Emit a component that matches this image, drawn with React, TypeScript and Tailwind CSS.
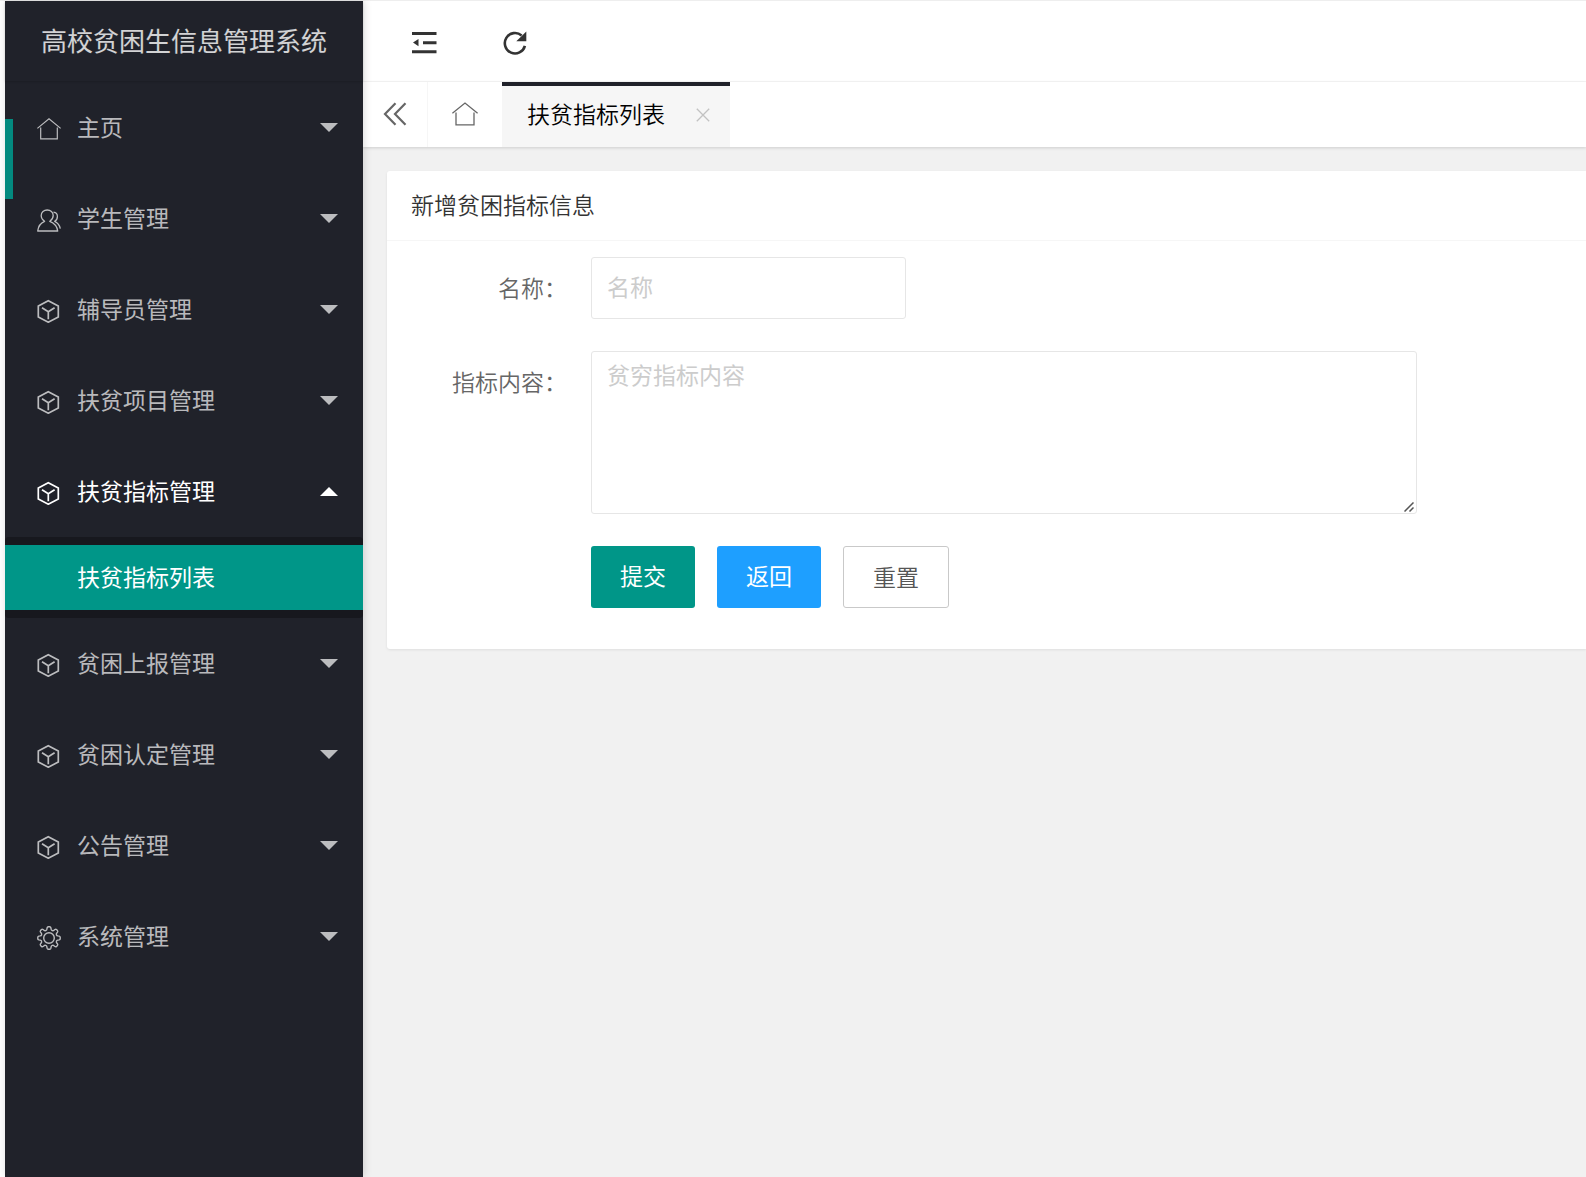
import React from 'react';

type IconName = 'home' | 'users' | 'cube' | 'gear';

interface MenuItem {
  title: string;
  icon: IconName;
  open?: boolean;
  children?: string[];
}

const menu: MenuItem[] = [
  { title: '主页', icon: 'home' },
  { title: '学生管理', icon: 'users' },
  { title: '辅导员管理', icon: 'cube' },
  { title: '扶贫项目管理', icon: 'cube' },
  { title: '扶贫指标管理', icon: 'cube', open: true, children: ['扶贫指标列表'] },
  { title: '贫困上报管理', icon: 'cube' },
  { title: '贫困认定管理', icon: 'cube' },
  { title: '公告管理', icon: 'cube' },
  { title: '系统管理', icon: 'gear' },
];

export default function App() {
  return (
    <div className="flex min-h-screen border-t border-[#eeeeee] bg-white pl-[5px] font-['Noto_Sans_CJK_SC',sans-serif] text-[23px] leading-8">
      <Sidebar />
      <div className="flex min-w-0 flex-1 flex-col bg-[#f1f1f1]">
        <Header />
        <TabBar />
        <main className="pt-6 pl-6">
          <IndicatorForm />
        </main>
      </div>
    </div>
  );
}

function Sidebar() {
  return (
    <aside className="relative z-10 w-[358px] shrink-0 bg-[#20222a] shadow-[1px_0_8px_rgba(0,0,0,0.15)]">
      <h1 className="flex h-20 items-center justify-center pb-0.5 text-[26px] font-normal text-white/80 shadow-[0_1px_2px_rgba(0,0,0,0.15)]">
        高校贫困生信息管理系统
      </h1>
      <span className="absolute top-[118px] left-0 h-20 w-2 bg-[#009688]/90"></span>
      <nav className="pt-px">
        <ul>
          {menu.map((item) => (
            <li key={item.title}>
              <a
                href="#"
                className={`flex h-[91px] items-center pr-[25px] pl-8 ${item.open ? 'text-white' : 'text-white/70'}`}
              >
                <span className="pt-[3px]">
                  <MenuIcon name={item.icon} />
                </span>
                <span className="ml-4 flex-1 pb-1">{item.title}</span>
                <svg width="18" height="9" viewBox="0 0 18 9" fill="currentColor">
                  <path d={item.open ? 'M0 9h18L9 0z' : 'M0 0h18L9 9z'} />
                </svg>
              </a>
              {item.children && (
                <ul className="rounded-sm bg-[#17181e] py-2">
                  {item.children.map((child) => (
                    <li key={child}>
                      <a href="#" className="flex h-[65px] items-center bg-[#009688] pb-1 pl-[72px] text-white">
                        {child}
                      </a>
                    </li>
                  ))}
                </ul>
              )}
            </li>
          ))}
        </ul>
      </nav>
    </aside>
  );
}

function Header() {
  return (
    <header className="flex h-[81px] items-center gap-[66px] border-b border-[#f6f6f6] bg-white pl-12 text-[#333333]">
      <button type="button" aria-label="侧边伸缩" className="pt-1">
        <svg width="26" height="24" viewBox="0 0 26 24" fill="currentColor">
          <path d="M1 1h24.500v3H1zM12 10.200h13.500v3H12zM1 19.300h24.500v3H1zM2 11.600l5.500-3.700v7.400z" />
        </svg>
      </button>
      <button type="button" aria-label="刷新" className="pt-1">
        <svg width="24" height="24" viewBox="0 0 24 24" fill="none">
          <path d="M18.600 4.400A10.200 10.200 0 1 0 21.900 14.800" stroke="currentColor" strokeWidth="2.600" />
          <path d="M23.300.6v9.600h-10z" fill="currentColor" />
        </svg>
      </button>
    </header>
  );
}

function TabBar() {
  return (
    <div className="flex h-[65px] bg-white shadow-[0_1px_3px_rgba(0,0,0,0.15)]">
      <button type="button" aria-label="向左" className="flex w-[65px] items-center justify-center border-r border-[#f6f6f6] pb-0.5 text-[#666666]">
        <svg width="24" height="24" viewBox="0 0 24 24" fill="none" stroke="currentColor" strokeWidth="2.200">
          <path d="M12.500 1.200 2 12l10.500 10.800M22.500 1.200 12 12l10.500 10.800" />
        </svg>
      </button>
      <button type="button" aria-label="主页" className="flex w-[74px] items-center justify-center pb-0.5 text-[#666666]">
        <HomeIcon size={26} />
      </button>
      <div className="flex w-[228px] items-center justify-between border-t-4 border-[#20222a] bg-[#f6f6f6] pr-5 pb-1 pl-[25px]">
        <a href="#" className="pb-1 font-[350] text-black">扶贫指标列表</a>
        <button type="button" aria-label="关闭" className="text-[#c2c2c2]">
          <svg width="14" height="14" viewBox="0 0 14 14" fill="none" stroke="currentColor" strokeWidth="1.300">
            <path d="m.8.800 12.400 12.400M13.200.8.800 13.200" />
          </svg>
        </button>
      </div>
    </div>
  );
}

function IndicatorForm() {
  return (
    <section className="rounded-l-[3px] bg-white shadow-[0_1px_3px_rgba(0,0,0,0.08)]">
      <h2 className="flex h-[70px] items-center border-b border-[#f6f6f6] pb-1 pl-6 font-[350] text-[#333333]">
        新增贫困指标信息
      </h2>
      <form className="flex flex-col gap-8 pt-4 pr-[169px] pb-[41px] text-[#666666]">
        <div className="flex">
          <label htmlFor="name" className="w-[204px] shrink-0 pt-[14px] pr-6 text-right font-[350]">名称：</label>
          <input
            id="name"
            type="text"
            placeholder="名称"
            className="h-[62px] w-[315px] rounded-[3px] border border-[#e6e6e6] px-[15px] pb-1 outline-none placeholder:text-[#cccccc]"
          />
        </div>
        <div className="flex">
          <label htmlFor="content" className="w-[204px] shrink-0 pt-[14px] pr-6 text-right font-[350]">指标内容：</label>
          <div className="relative min-w-0 flex-1">
            <textarea
              id="content"
              placeholder="贫穷指标内容"
              className="block h-[163px] w-full resize-none rounded-[3px] border border-[#e6e6e6] px-[15px] py-1.5 outline-none placeholder:text-[#cccccc]"
            />
            <svg
              className="pointer-events-none absolute right-[3px] bottom-0.5 text-[#555555]"
              width="10"
              height="10"
              viewBox="0 0 10 10"
              fill="none"
              stroke="currentColor"
              strokeWidth="1.500"
            >
              <path d="M.5 9.500l9-9M5.500 9.500l4-4" />
            </svg>
          </div>
        </div>
        <div className="flex gap-[22px] pl-[204px]">
          <button type="submit" className="h-[62px] w-[104px] rounded-[3px] bg-[#009688] pb-1 text-white">提交</button>
          <button type="button" className="h-[62px] w-[104px] rounded-[3px] bg-[#1e9fff] pb-1 text-white">返回</button>
          <button type="reset" className="h-[62px] w-[106px] rounded-[3px] border border-[#c9c9c9] bg-white pb-0.5 font-[350] text-[#555555]">
            重置
          </button>
        </div>
      </form>
    </section>
  );
}

function HomeIcon({ size }: { size: number }) {
  return (
    <svg width={size} height={size} viewBox="0 0 26 26" fill="none" stroke="currentColor" strokeWidth="1.300">
      <path d="M.4 12.300 13 2l12.600 10.300M4 11.500v12.300h18V11.500" />
    </svg>
  );
}

function MenuIcon({ name }: { name: IconName }) {
  if (name === 'home') {
    return <HomeIcon size={24} />;
  }

  if (name === 'users') {
    return (
      <svg width="24" height="24" viewBox="0 0 24 24" fill="none" stroke="currentColor" strokeWidth="1.300" strokeLinejoin="round">
        <path d="M7.600 13.300C5.500 12 4.200 10 4.200 7.600 4.200 4.300 6.900 2 10.200 2s6 2.300 6 5.600c0 2.400-1.300 4.400-3.400 5.700 4.300 1.700 7.300 5 7.900 9.700H.7c.5-4.700 2.700-8 6.900-9.700z" />
        <path d="M16.500 4.200c2.400.3 3.900 2 3.900 4.200 0 2-1 3.900-2.700 5 2.900 1.400 5 3.900 5.600 7.300" />
      </svg>
    );
  }

  if (name === 'gear') {
    // one quarter of the outline, repeated around the centre
    const quarter =
      'M12 .8h.7q1 0 1.200 1L14.100 3.200Q14.300 4.300 15.300 4.600 16.200 4.900 17 4.200L17.900 3.500Q18.800 2.900 19.500 3.600L20.400 4.500Q21.100 5.200 20.500 6.100L19.800 7Q19.100 7.800 19.400 8.700 19.700 9.700 20.800 9.900L22.200 10.100Q23.200 10.300 23.200 11.300V12';
    return (
      <svg width="24" height="24" viewBox="0 0 24 24" fill="none" stroke="currentColor" strokeWidth="1.400">
        <circle cx="12" cy="12" r="5.300" />
        {[0, 90, 180, 270].map((angle) => (
          <path key={angle} d={quarter} transform={`rotate(${angle} 12 12)`} />
        ))}
      </svg>
    );
  }

  return (
    <svg width="24" height="24" viewBox="0 0 24 24" fill="none" stroke="currentColor" strokeWidth="1.700">
      <path d="M11.300 1.700 21.300 7v11l-10 5.200L1.300 18V7zM5 8.800l6.300 4 6.300-4M11.300 12.800v7.400" />
    </svg>
  );
}
